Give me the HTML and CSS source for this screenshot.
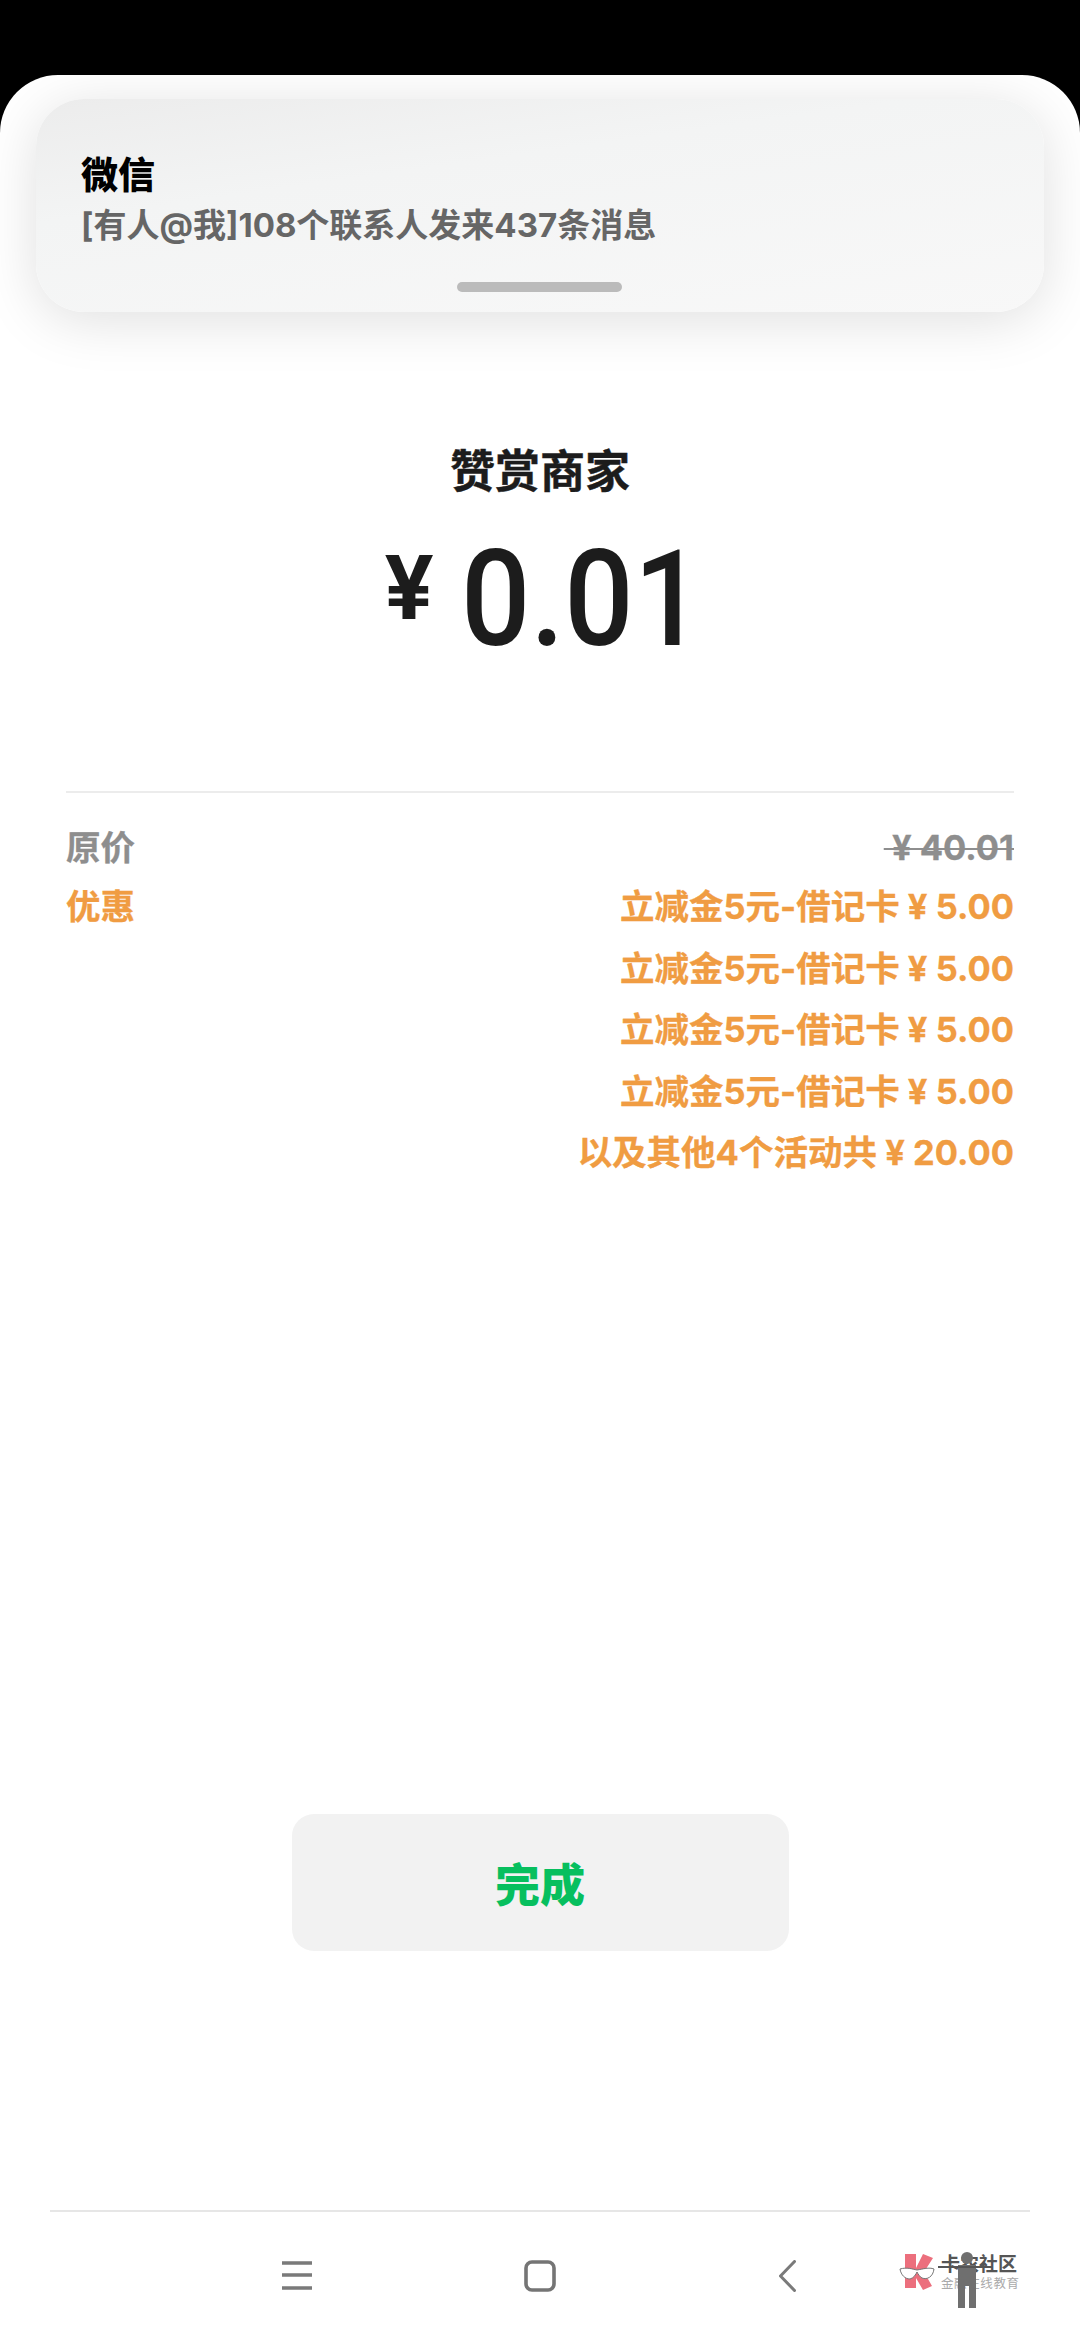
FILE: index.html
```html
<!DOCTYPE html>
<html lang="zh-CN">
<head>
<meta charset="utf-8">
<title>赞赏商家</title>
<link rel="stylesheet" href="styles.css">
</head>
<body>
<div class="status"></div>
<div class="sheet">
  <main class="content">
    <h1 class="title">赞赏商家</h1>
    <div class="amount"><span class="yen">¥</span><span class="num">0<span class="dot">.</span>01</span></div>
    <section class="details">
      <div class="row row-gray">
        <span>原价</span>
        <span class="strike">&nbsp;¥ 40.01</span>
      </div>
      <div class="row row-orange">
        <span>优惠</span>
        <div class="promos">
          <div>立减金5元-借记卡 ¥ 5.00</div>
          <div>立减金5元-借记卡 ¥ 5.00</div>
          <div>立减金5元-借记卡 ¥ 5.00</div>
          <div>立减金5元-借记卡 ¥ 5.00</div>
          <div>以及其他4个活动共 ¥ 20.00</div>
        </div>
      </div>
    </section>
    <div class="spacer"></div>
    <button class="done">完成</button>
  </main>
  <nav class="navbar">
    <svg class="ic-menu" width="30" height="30" viewBox="0 0 30 30"><path d="M0 3H30M0 15H30M0 28H30" stroke="#7a7a7a" stroke-width="3.4" fill="none"/></svg>
    <svg class="ic-home" width="32" height="32" viewBox="0 0 32 32"><rect x="2" y="2" width="28" height="28" rx="6" stroke="#757575" stroke-width="3.6" fill="none"/></svg>
    <svg class="ic-back" width="17" height="32" viewBox="0 0 17 32"><path d="M15.5 1.5L1.5 16L15.5 30.5" stroke="#7a7a7a" stroke-width="3" stroke-linecap="round" stroke-linejoin="round" fill="none"/></svg>
  </nav>
</div>

<aside class="notice">
  <div class="notice-title">微信</div>
  <div class="notice-text">[有人@我]108个联系人发来437条消息</div>
  <div class="handle"></div>
</aside>

<div class="watermark">
  <svg class="wm-logo" width="38" height="38" viewBox="0 0 38 38">
    <path d="M6 1H17V15L24 1L34 5L25 19L33 33L24 37L17 25V35H6Z" fill="#ec6f7d"/>
    <path d="M1 16C8 14 13 16 18 17C24 16 30 14 35 16C34 24 28 27 23 25C21 24 19 21 18 19C17 21 15 25 11 26C6 26 2 22 1 16Z" fill="#fff" stroke="#777" stroke-width="1"/>
  </svg>
  <div class="wm-text">
    <div class="wm-main">卡农社区</div>
    <div class="wm-sub">金融在线教育</div>
  </div>
  <svg class="wm-person" width="54" height="56" viewBox="0 0 54 56">
    <circle cx="29" cy="6" r="6" fill="#6f6f6f"/>
    <path d="M20 13H38V56H31V34H27V56H20Z" fill="#6f6f6f"/>
    <path d="M0 15H54" stroke="#555" stroke-width="2"/>
  </svg>
</div>
</body>
</html>
```

FILE: styles.css
```css
* { box-sizing: border-box; margin: 0; padding: 0; }
html, body { width: 1080px; height: 2340px; background: #000; overflow: hidden; }
body {
  font-family: Inter, "Noto Sans CJK SC", sans-serif;
  position: relative;
  display: flex;
  flex-direction: column;
}
.status { height: 75px; flex: none; background: #000; }
.sheet {
  flex: 1;
  display: flex;
  flex-direction: column;
  background: #fff;
  border-radius: 58px 58px 0 0;
  overflow: hidden;
}
.content {
  flex: 1;
  display: flex;
  flex-direction: column;
  align-items: center;
  padding: 365px 66px 259px;
}
.title {
  font-size: 45px;
  line-height: 64px;
  font-weight: 700;
  color: #1c1c1c;
  -webkit-text-stroke: .4px #1c1c1c;
}
.amount {
  display: flex;
  align-items: flex-start;
  justify-content: center;
  margin-top: 31px;
  height: 119px;
  color: #1c1c1c;
}
.yen {
  font-size: 88px;
  line-height: 104px;
  font-weight: 700;
  margin-right: 27px;
}
.num {
  display: block;
  width: 235px;
  white-space: nowrap;
  font-family: Roboto, sans-serif;
  font-size: 133px;
  line-height: 130px;
  font-weight: 500;
  transform: scaleX(.918);
  transform-origin: left center;
}
.details {
  width: 100%;
  margin-top: 137px;
  border-top: 2px solid #ececec;
  padding-top: 27px;
  font-size: 34.5px;
  line-height: 61.5px;
  font-weight: 700;
  -webkit-text-stroke: .3px currentColor;
}
.row { display: flex; justify-content: space-between; }
.row-gray { color: #8e8e8e; line-height: 56px; }
.row-orange { color: #f09c42; }
.promos { text-align: right; }
.strike { text-decoration: line-through; text-decoration-thickness: 2px; }
.spacer { flex: 1; }
.done {
  width: 497px;
  height: 137px;
  flex: none;
  border: 0;
  border-radius: 22px;
  background: #f2f2f2;
  color: #07bf5e;
  font-family: inherit;
  font-size: 45px;
  font-weight: 900;
}
.navbar {
  height: 130px;
  flex: none;
  margin: 0 50px;
  border-top: 2px solid #e6e6e6;
  display: flex;
  align-items: flex-start;
  padding: 48px 0 0 232px;
}
.ic-home { margin-left: 212px; }
.ic-back { margin-left: 223px; }

.notice {
  position: absolute;
  left: 36px;
  top: 99px;
  width: 1008px;
  height: 213px;
  border-radius: 48px;
  background: linear-gradient(172deg, #ececec 0%, #f3f4f4 35%, #f8f8f8 100%);
  box-shadow: 0 8px 56px rgba(0,0,0,.13);
  padding: 53px 45px 0;
}
.notice-title { font-size: 37px; line-height: 48px; font-weight: 900; color: #000; }
.notice-text { font-size: 33px; line-height: 44px; font-weight: 700; color: #666; margin-top: 3px; }
.handle {
  position: absolute;
  left: 421px;
  top: 183px;
  width: 165px;
  height: 10px;
  border-radius: 5px;
  background: #bbb;
}

.watermark {
  position: absolute;
  left: 899px;
  top: 2250px;
  width: 130px;
  height: 56px;
  display: flex;
  gap: 4px;
  padding-top: 3px;
}
.wm-logo { flex: none; }
.wm-text { white-space: nowrap; padding-top: 1px; }
.wm-main { font-size: 19px; line-height: 22px; font-weight: 700; color: #555; }
.wm-sub { font-size: 12.5px; line-height: 16px; color: #aaa; letter-spacing: .6px; }
.wm-person { position: absolute; left: 39px; top: 2px; }
```
